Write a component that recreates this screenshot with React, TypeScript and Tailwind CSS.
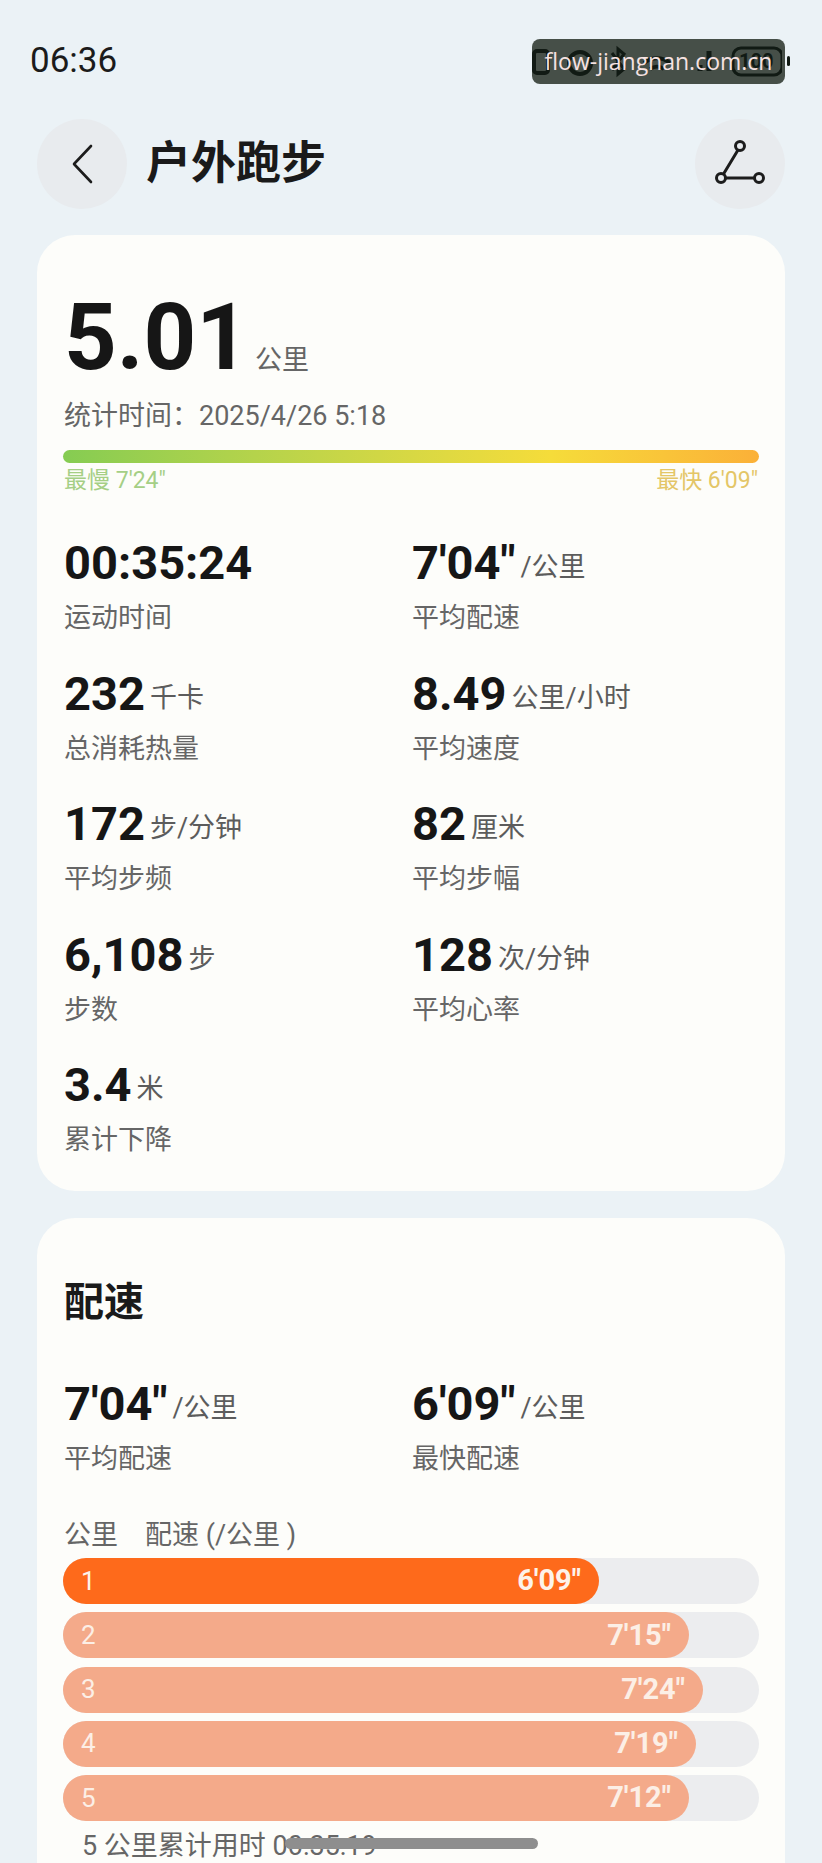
import React from 'react';

const FONT = "font-['Roboto','Noto_Sans_CJK_SC',sans-serif]";

const stats = [
    [
        { value: '00:35:24', unit: '', label: '运动时间' },
        { value: `7'04"`, unit: '/公里', label: '平均配速' },
    ],
    [
        { value: '232', unit: '千卡', label: '总消耗热量' },
        { value: '8.49', unit: '公里/小时', label: '平均速度' },
    ],
    [
        { value: '172', unit: '步/分钟', label: '平均步频' },
        { value: '82', unit: '厘米', label: '平均步幅' },
    ],
    [
        { value: '6,108', unit: '步', label: '步数' },
        { value: '128', unit: '次/分钟', label: '平均心率' },
    ],
    [{ value: '3.4', unit: '米', label: '累计下降' }],
];

const splits = [
    { km: 1, pace: `6'09"`, width: 'w-[536px]', fill: 'bg-[#fe6a1b]', text: 'text-[#fdf3ea]' },
    { km: 2, pace: `7'15"`, width: 'w-[626px]', fill: 'bg-[#f4aa8a]', text: 'text-[#fcefe6]' },
    { km: 3, pace: `7'24"`, width: 'w-[640px]', fill: 'bg-[#f4aa8a]', text: 'text-[#fcefe6]' },
    { km: 4, pace: `7'19"`, width: 'w-[633px]', fill: 'bg-[#f4aa8a]', text: 'text-[#fcefe6]' },
    { km: 5, pace: `7'12"`, width: 'w-[626px]', fill: 'bg-[#f4aa8a]', text: 'text-[#fcefe6]' },
];

function Stat({ value, unit, label }: { value: string; unit: string; label: string }) {
    return (
        <div className="flex flex-col">
            <div className="flex items-baseline h-[56px]">
                <span className="text-[47px] leading-[56px] font-bold text-[#161616]">{value}</span>
                {unit && <span className="ml-[5px] -translate-y-[3px] text-[27px] text-[#5c5c5c]">{unit}</span>}
            </div>
            <span className="mt-[9px] text-[27px] leading-[36px] text-[#666666]">{label}</span>
        </div>
    );
}

function StatusIcons() {
    return (
        <div className="absolute inset-0 flex items-center text-[#111a14]">
            <svg width="250" height="45" viewBox="0 0 250 45" fill="none" stroke="currentColor" strokeWidth="4">
                <rect x="2" y="12" width="14" height="22" rx="3" />
                <circle cx="48" cy="24" r="11" />
                <path d="M80 14l12 16-6 5V10l6 5-12 16" strokeWidth="3" />
                <path d="M112 24a20 20 0 0 1 26 0M118 30a12 12 0 0 1 14 0" />
                <path d="M168 32v-6M177 32V12" strokeWidth="5" />
                <rect x="201" y="9" width="49" height="27" rx="8" strokeWidth="3" />
            </svg>
            <span className="absolute left-[207px] top-[9px] text-[20px] leading-[27px] font-bold">100</span>
        </div>
    );
}

export default function App() {
    return (
        <div className={`relative w-[822px] h-[1863px] overflow-hidden bg-[#ebf2f6] ${FONT}`}>
            <div className="flex items-center justify-between h-[119px] pt-[4px] pl-[30px] pr-[37px]">
                <span className="text-[35px] text-[#1b1b1b]">06:36</span>
                <div className="relative w-[253px] h-[45px] rounded-[8px] bg-[#464f48]">
                    <StatusIcons />
                    <span className="absolute inset-0 text-center font-['Open_Sans',sans-serif] text-[23px] leading-[45px] text-[#f6e2e2]">
                        flow-jiangnan.com.cn
                    </span>
                    <span className="absolute right-[-5px] top-[17px] w-[3px] h-[10px] rounded-sm bg-[#111a14]" />
                </div>
            </div>

            <div className="flex items-center justify-between pl-[37px] pr-[37px]">
                <div className="flex items-center">
                    <button className="flex items-center justify-center w-[90px] h-[90px] rounded-full bg-[#e8ebee]">
                        <svg width="24" height="40" viewBox="0 0 24 40" fill="none" stroke="#1c1c1c" strokeWidth="2.6" strokeLinecap="round" strokeLinejoin="round">
                            <path d="M21 2 4 20l17 18" />
                        </svg>
                    </button>
                    <h1 className="ml-[19px] text-[45px] font-bold text-[#1a1a1a]">户外跑步</h1>
                </div>
                <button className="flex items-center justify-center w-[90px] h-[90px] rounded-full bg-[#e8ebee]">
                    <svg width="52" height="48" viewBox="0 0 52 48" fill="none" stroke="#1c1c1c" strokeWidth="3">
                        <circle cx="26" cy="6" r="4.5" />
                        <circle cx="7" cy="38" r="4.5" />
                        <circle cx="45" cy="38" r="4.5" />
                        <path d="M24 10 9.5 34M12 38h28" />
                    </svg>
                </button>
            </div>

            <section className="mx-[37px] mt-[26px] h-[956px] rounded-[38px] bg-[#fdfdfa] px-[27px] pt-[53px]">
                <div className="flex items-baseline h-[100px]">
                    <span className="text-[92px] leading-[100px] font-bold text-[#161616]">5.01</span>
                    <span className="ml-[6px] text-[27px] text-[#666666]">公里</span>
                </div>
                <p className="mt-[10px] text-[27px] leading-[36px] text-[#666666]">统计时间：2025/4/26 5:18</p>
                <div className="mt-[16px] h-[13px] -mx-[1px] rounded-full bg-gradient-to-r from-[#85cc52] via-[#f5dc3a] via-70% to-[#fbb038]" />
                <div className="flex justify-between mt-[3px] text-[23px] leading-[30px]">
                    <span className="text-[#a5cf85]">最慢 7'24"</span>
                    <span className="text-[#e4c667]">最快 6'09"</span>
                </div>
                <div className="mt-[39px] flex flex-col gap-[29.5px]">
                    {stats.map((row, i) => (
                        <div key={i} className="grid grid-cols-[348px_1fr]">
                            {row.map((s) => (
                                <Stat key={s.label} {...s} />
                            ))}
                        </div>
                    ))}
                </div>
            </section>

            <section className="mx-[37px] mt-[27px] rounded-t-[38px] bg-[#fdfdfa] h-[700px] px-[27px] pt-[60px]">
                <h2 className="text-[40px] leading-[50px] font-bold text-[#1a1a1a]">配速</h2>
                <div className="mt-[48px] grid grid-cols-[348px_1fr]">
                    <Stat value={`7'04"`} unit="/公里" label="平均配速" />
                    <Stat value={`6'09"`} unit="/公里" label="最快配速" />
                </div>
                <div className="mt-[40px] flex text-[27px] leading-[36px] text-[#666666] whitespace-pre">
                    <span className="w-[81px]">公里</span>
                    <span>配速 (/公里 )</span>
                </div>
                <div className="mt-[5px] -mx-[1px] flex flex-col gap-[8.3px]">
                    {splits.map((s) => (
                        <div key={s.km} className="h-[46px] rounded-full bg-[#ecedef]">
                            <div className={`flex h-full items-center justify-between rounded-full pl-[18px] pr-[18px] ${s.width} ${s.fill} ${s.text}`}>
                                <span className="text-[26px]">{s.km}</span>
                                <span className="text-[29px] font-bold">{s.pace}</span>
                            </div>
                        </div>
                    ))}
                </div>
                <p className="mt-[10px] pl-[18px] text-[27px] leading-[30px] text-[#666666]">5 公里累计用时 00:35:19</p>
            </section>

            <div className="absolute left-[285px] top-[1838px] w-[253px] h-[11px] rounded-full bg-[#8e8e8e]" />
        </div>
    );
}
